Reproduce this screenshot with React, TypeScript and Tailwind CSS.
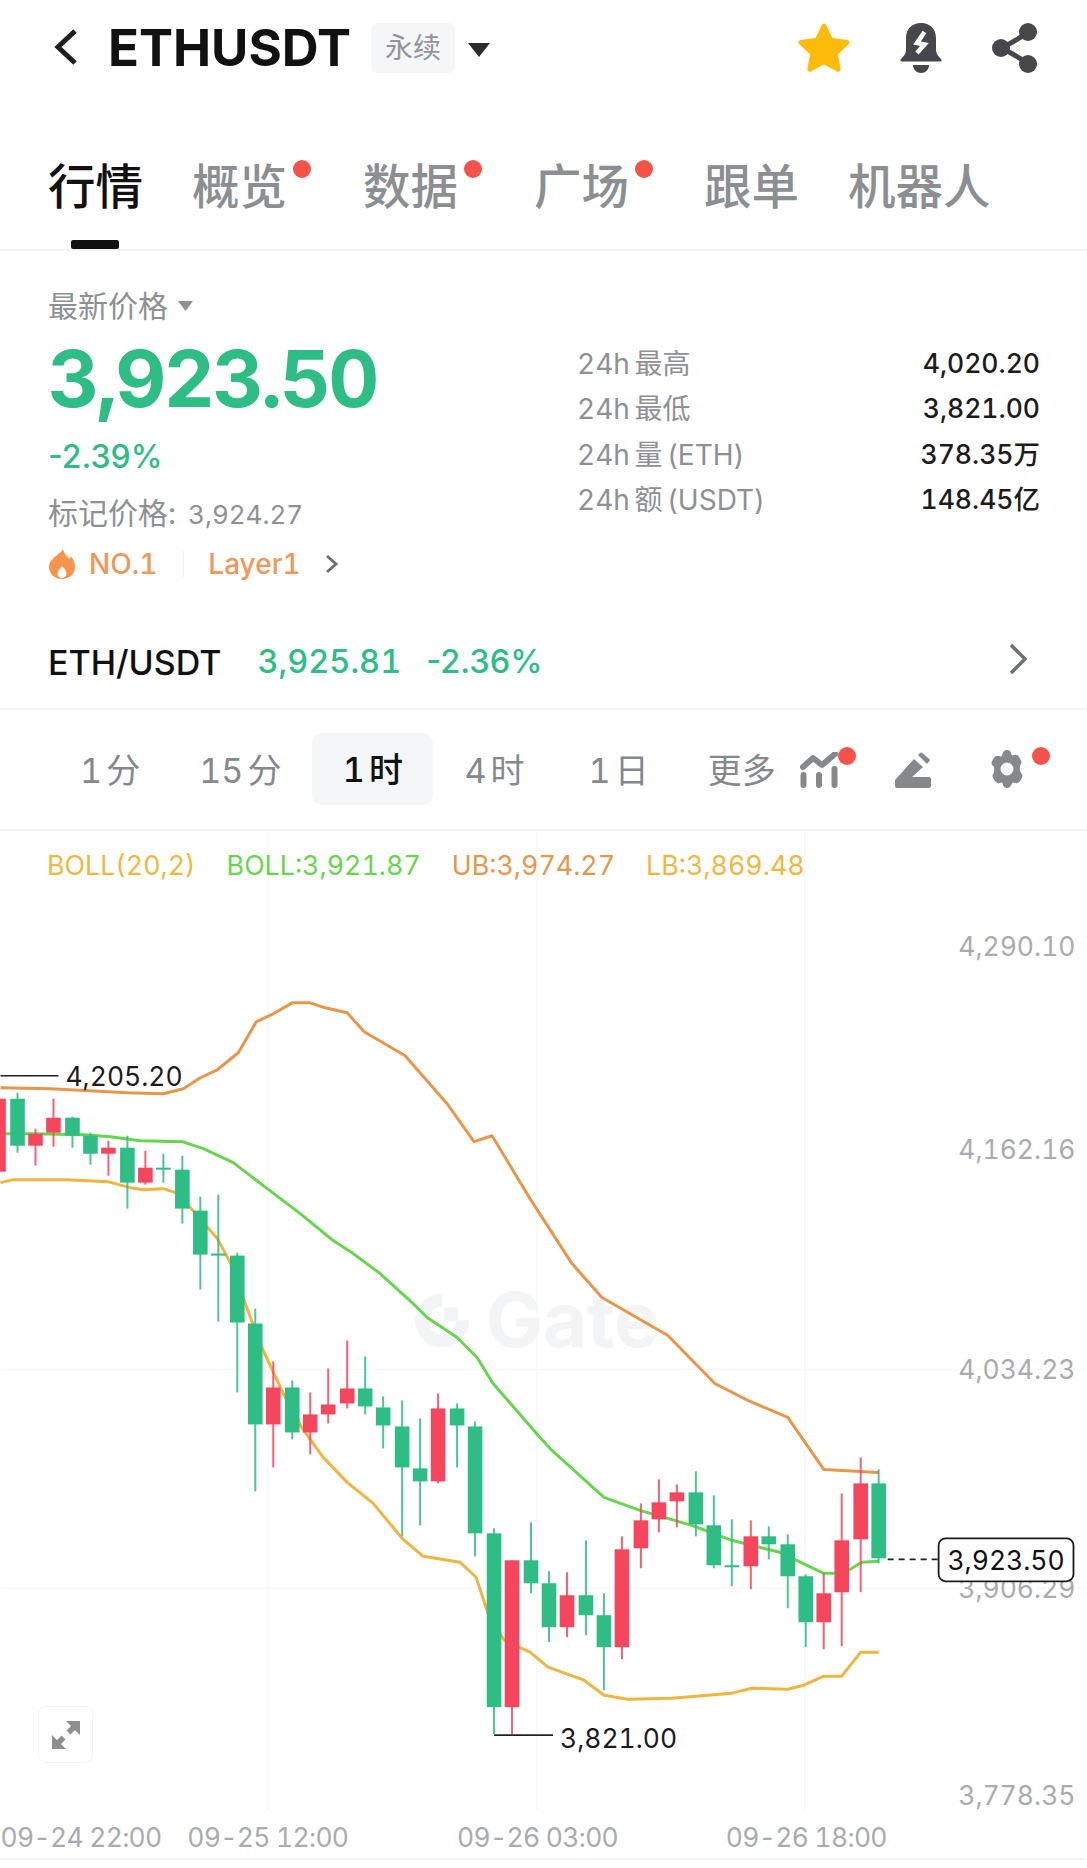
import React from 'react'

const FONT = "font-['Inter','Noto_Sans_CJK_SC',sans-serif]"

// [x, wickTop, wickBottom, bodyTop, bodyBottom, up]
const candles: [number, number, number, number, number, number][] = [
  [-2, 1098, 1171, 1098, 1171, 1],
  [17, 1092, 1152, 1098, 1145, 0],
  [35, 1128, 1165, 1133, 1145, 1],
  [53, 1098, 1146, 1117, 1132, 1],
  [72, 1116, 1147, 1117, 1135, 0],
  [90, 1132, 1164, 1135, 1153, 0],
  [108, 1140, 1175, 1147, 1153, 1],
  [127, 1135, 1208, 1147, 1182, 0],
  [145, 1150, 1184, 1167, 1182, 1],
  [163, 1153, 1182, 1167, 1169, 0],
  [182, 1155, 1223, 1169, 1208, 0],
  [200, 1196, 1289, 1210, 1254, 0],
  [218, 1194, 1321, 1253, 1255, 0],
  [237, 1252, 1392, 1255, 1322, 0],
  [255, 1308, 1491, 1323, 1424, 0],
  [273, 1361, 1467, 1387, 1424, 1],
  [292, 1380, 1439, 1387, 1432, 0],
  [310, 1392, 1454, 1414, 1432, 1],
  [328, 1368, 1423, 1404, 1414, 1],
  [347, 1340, 1408, 1388, 1403, 1],
  [365, 1356, 1414, 1388, 1406, 0],
  [383, 1396, 1448, 1407, 1425, 0],
  [402, 1400, 1536, 1426, 1467, 0],
  [420, 1418, 1525, 1468, 1481, 0],
  [438, 1393, 1483, 1408, 1481, 1],
  [457, 1403, 1467, 1408, 1425, 0],
  [475, 1421, 1556, 1426, 1533, 0],
  [494, 1528, 1734, 1533, 1707, 0],
  [512, 1560, 1734, 1560, 1707, 1],
  [531, 1522, 1593, 1560, 1583, 0],
  [549, 1571, 1642, 1583, 1627, 0],
  [567, 1572, 1637, 1595, 1627, 1],
  [586, 1540, 1635, 1595, 1615, 0],
  [604, 1593, 1690, 1615, 1647, 0],
  [622, 1536, 1659, 1549, 1647, 1],
  [641, 1503, 1568, 1520, 1548, 1],
  [659, 1479, 1532, 1502, 1519, 1],
  [677, 1484, 1527, 1492, 1501, 1],
  [696, 1471, 1536, 1492, 1524, 0],
  [714, 1495, 1568, 1525, 1565, 0],
  [732, 1519, 1586, 1565, 1567, 0],
  [751, 1520, 1589, 1536, 1566, 1],
  [769, 1526, 1559, 1536, 1544, 0],
  [788, 1534, 1608, 1544, 1576, 0],
  [806, 1574, 1647, 1576, 1622, 0],
  [824, 1573, 1649, 1593, 1622, 1],
  [842, 1493, 1646, 1540, 1592, 1],
  [861, 1457, 1592, 1483, 1539, 1],
  [879, 1469, 1563, 1483, 1558, 0],
]

const upperBand =
  '0,1087 50,1088 127,1092 163,1093 183,1088 200,1077 217,1069 238,1052 256,1021 273,1013 292,1002 310,1002 325,1007 347,1012 364,1031 405,1055 447,1103 474,1141 492,1135 530,1198 572,1263 602,1297 668,1335 715,1383 748,1400 788,1417 824,1469 879,1472'
const midBand =
  '0,1133 33,1133 83,1134 110,1136 140,1140 182,1141 203,1148 233,1162 267,1188 300,1213 333,1240 353,1253 380,1273 413,1303 427,1317 457,1337 477,1357 493,1383 540,1437 552,1450 604,1497 640,1510 692,1525 732,1540 780,1552 824,1573 844,1573 862,1562 879,1561'
const lowerBand =
  '0,1182 13,1179 67,1179 107,1181 130,1187 143,1189 163,1188 175,1192 190,1207 217,1238 230,1262 252,1322 263,1350 283,1393 302,1428 323,1457 347,1482 373,1503 402,1538 423,1556 460,1562 476,1577 488,1613 504,1640 530,1652 548,1667 584,1680 604,1695 628,1699 672,1698 732,1693 752,1688 788,1689 804,1685 824,1676 842,1676 861,1652 879,1652'

const yLabels: [string, number][] = [
  ['4,290.10', 945],
  ['4,162.16', 1148],
  ['4,034.23', 1369],
  ['3,906.29', 1588],
  ['3,778.35', 1795],
]

const xLabels: [string, number][] = [
  ['09-24 22:00', 0],
  ['09-25 12:00', 187],
  ['09-26 03:00', 457],
  ['09-26 18:00', 726],
]

const stats = [
  ['24h 最高', '4,020.20'],
  ['24h 最低', '3,821.00'],
  ['24h 量 (ETH)', '378.35万'],
  ['24h 额 (USDT)', '148.45亿'],
]

function RedDot() {
  return <span className="absolute top-[1px] -right-[24px] w-[18px] h-[18px] rounded-full bg-[#f5524a]" />
}

function Chart() {
  return (
    <svg viewBox="0 830 1087 1038" className="w-full h-full block">
      <g stroke="#f6f7f8" strokeWidth="1.5">
        <line x1="268" y1="830" x2="268" y2="1810" />
        <line x1="537" y1="830" x2="537" y2="1810" />
        <line x1="805" y1="830" x2="805" y2="1810" />
        <line x1="0" y1="1369" x2="1087" y2="1369" />
        <line x1="0" y1="1588" x2="1087" y2="1588" />
      </g>
      <line x1="0" y1="1859" x2="1087" y2="1859" stroke="#f3f4f5" strokeWidth="2" />

      {/* watermark */}
      <g fill="#f2f4f5">
        <path d="M442 1293a27 27 0 1 0 27 27h-13a14 14 0 1 1-14-14z" />
        <rect x="444" y="1307" width="14" height="14" />
        <text x="486" y="1347" fontSize="76" fontWeight="700">
          Gate
        </text>
      </g>

      <polyline points={upperBand} fill="none" stroke="#e8964a" strokeWidth="3" strokeLinejoin="round" />
      <polyline points={lowerBand} fill="none" stroke="#f0b440" strokeWidth="3" strokeLinejoin="round" />
      <polyline points={midBand} fill="none" stroke="#66d64c" strokeWidth="3" strokeLinejoin="round" />

      {candles.map(([x, wt, wb, bt, bb, up]) => {
        const c = up ? '#f6465d' : '#2ebd85'
        return (
          <g key={x}>
            <line x1={x} y1={wt} x2={x} y2={wb} stroke={c} strokeWidth="2" opacity="0.85" />
            <rect x={x - 7.3} y={bt} width="14.6" height={bb - bt} fill={c} />
          </g>
        )
      })}

      {/* high / low markers */}
      <line x1="0" y1="1075" x2="58" y2="1075" stroke="#222" strokeWidth="1.6" />
      <text x="65" y="1085" fontSize="26.5" fill="#1c1c1c">
        4,205.20
      </text>
      <line x1="494" y1="1735" x2="553" y2="1735" stroke="#222" strokeWidth="1.6" />
      <text x="560" y="1748" fontSize="26.5" fill="#1c1c1c">
        3,821.00
      </text>

      {yLabels.map(([t, y]) => (
        <text key={t} x="1076" y={y + 10} textAnchor="end" fontSize="26.5" fill="#a9acae">
          {t}
        </text>
      ))}
      {xLabels.map(([t, x]) => (
        <text key={t} x={x} y="1847" fontSize="26.5" fill="#a9acae" className="tracking-[-0.7px]">
          {t}
        </text>
      ))}

      {/* last price */}
      <line x1="888" y1="1559" x2="939" y2="1559" stroke="#222" strokeWidth="1.8" strokeDasharray="6 5" />
      <rect x="939" y="1538" width="135" height="43" rx="7" fill="#fff" stroke="#1c1c1c" strokeWidth="1.8" />
      <text x="1006.5" y="1570" textAnchor="middle" fontSize="26.5" fill="#111">
        3,923.50
      </text>
    </svg>
  )
}

export default function App() {
  return (
    <div className={`w-[1087px] h-[1868px] flex flex-col bg-white overflow-hidden tabular-nums ${FONT}`}>
      {/* header */}
      <div className="h-[96px] flex items-start pt-[23px] pl-[52px] pr-[49px] shrink-0">
        <svg width="26" height="38" viewBox="0 0 26 38" className="mt-[5px]">
          <path d="M23 3 6 19l17 16" fill="none" stroke="#1f1f1f" strokeWidth="5" strokeLinejoin="miter" />
        </svg>
        <span className="ml-[30px] text-[51px] leading-[50px] font-bold text-[#111]">ETHUSDT</span>
        <span className="ml-[20px] w-[84px] h-[50px] rounded-[7px] bg-[#f5f6f7] flex items-center justify-center text-[28px] text-[#92969a]">
          永续
        </span>
        <svg width="22" height="14" viewBox="0 0 22 14" className="ml-[13px] mt-[20px]">
          <path d="M0 0h22L11 14z" fill="#2d2d2d" />
        </svg>
        <div className="ml-auto flex items-start gap-[49px]">
          <svg width="52" height="50" viewBox="0 0 52 50">
            <path
              d="M26 3l6.7 14.2 16.3 2.2-11.8 11 2.9 15.8L26 38.5l-14.1 7.7 2.9-15.8L3 19.4l16.3-2.2z"
              fill="#ffbb0a"
              stroke="#ffbb0a"
              strokeWidth="5"
              strokeLinejoin="round"
            />
          </svg>
          <svg width="44" height="50" viewBox="0 0 44 50">
            <path
              fill="#45474c"
              d="M22 0c9.500 0 15 6.500 15 15v12c0 3.500 2 6 5 9 1.200 1.200.5 2.500-1 2.500H3c-1.500 0-2.200-1.300-1-2.500 3-3 5-5.500 5-9V15C7 6.500 12.500 0 22 0z"
            />
            <path d="M25.500 9 18 20l7.500 1.500L18 30" fill="none" stroke="#fff" strokeWidth="4.500" />
            <path d="M14 42h16c0 4.500-3.500 8-8 8s-8-3.500-8-8z" fill="#45474c" />
          </svg>
          <svg width="46" height="50" viewBox="0 0 46 50">
            <path d="M36 10 10 25l26 15" fill="none" stroke="#45474c" strokeWidth="5" />
            <circle cx="36" cy="9" r="9" fill="#45474c" />
            <circle cx="9" cy="25" r="9" fill="#45474c" />
            <circle cx="36" cy="41" r="9" fill="#45474c" />
          </svg>
        </div>
      </div>

      {/* tabs */}
      <div className="h-[155px] shrink-0 relative border-b-2 border-[#f3f4f5] text-[47.5px] leading-[56px] font-medium text-[#8b8f92]">
        <div className="flex pl-[48px] pt-[63px]">
          <span className="relative text-[#111]">
            行情
            <span className="absolute left-[23px] top-[81px] w-[48px] h-[9px] rounded-[2px] bg-[#111]" />
          </span>
          <span className="relative ml-[49px]">
            概览
            <RedDot />
          </span>
          <span className="relative ml-[76px]">
            数据
            <RedDot />
          </span>
          <span className="relative ml-[76px]">
            广场
            <RedDot />
          </span>
          <span className="ml-[75px]">跟单</span>
          <span className="ml-[49px]">机器人</span>
        </div>
      </div>

      {/* market summary */}
      <div className="h-[335px] shrink-0 flex pl-[48px] pr-[47px] pt-[37px]">
        <div className="flex-1 flex flex-col items-start">
          <div className="flex items-center h-[36px] text-[30px] text-[#8d9194]">
            最新价格
            <svg width="15" height="10" viewBox="0 0 15 10" className="ml-[10px]">
              <path d="M0 0h15L7.500 10z" fill="#8d9194" />
            </svg>
          </div>
          <div className="mt-[11px] h-[86px] leading-[86px] text-[79px] font-bold text-[#2ebd85] tracking-[-2.5px]">
            3,923.50
          </div>
          <div className="mt-[18px] h-[36px] leading-[36px] text-[32px] font-medium text-[#2ebd85] normal-nums">-2.39%</div>
          <div className="mt-[20px] h-[36px] leading-[36px] text-[26px] text-[#8d9194] flex items-baseline">
            <span className="text-[30px]">标记价格:</span>
            <span className="ml-[12px]">3,924.27</span>
          </div>
          <div className="mt-[11px] h-[44px] flex items-center text-[28px] font-medium text-[#f0975a]">
            <svg width="26" height="30" viewBox="0 0 26 30" className="ml-[1px]">
              <path
                fill="#f8934a"
                fillRule="evenodd"
                d="M14 0c1 5 4 7 6.500 10 .8-1 1.200-2 1.300-3 2.500 3 4.200 7 4.200 11 0 7-5.500 12-13 12S0 25 0 18C0 11 7 8 9 5c2-1 4-3 5-5zm-1 17c-2 2.500-4.500 4.500-4.500 7.500 0 2.500 2 4.500 4.500 4.500s4.500-2 4.500-4.500c0-3-2.500-5-4.500-7.500z"
              />
            </svg>
            <span className="ml-[14px]">NO.1</span>
            <span className="ml-[26px] w-[1px] h-[26px] bg-[#eeeff0]" />
            <span className="ml-[24px]">Layer1</span>
            <svg width="16" height="20" viewBox="0 0 16 20" className="ml-[23px]">
              <path d="M3 2l9 8-9 8" fill="none" stroke="#6d7175" strokeWidth="3" />
            </svg>
          </div>
        </div>
        <div className="w-[463px] pt-[53px] flex flex-col">
          {stats.map(([k, v]) => (
            <div key={k} className="flex items-center justify-between h-[45.500px]">
              <span className="text-[28px] text-[#8d9194] [word-spacing:-3px]">{k}</span>
              <span className="text-[26.5px] text-[#1c1c1c] font-medium">{v}</span>
            </div>
          ))}
        </div>
      </div>

      {/* spot pair */}
      <div className="h-[124px] shrink-0 border-b-2 border-[#f3f4f5] flex items-center pt-[30px] pl-[48px] pr-[59px] text-[32.5px] font-medium">
        <span className="text-[34px] text-[#111]">ETH/USDT</span>
        <span className="ml-[36px] text-[#2ebd85]">3,925.81</span>
        <span className="ml-[25px] text-[#2ebd85] normal-nums">-2.36%</span>
        <svg width="20" height="32" viewBox="0 0 20 32" className="ml-auto -mt-[6px]">
          <path d="M3 2l14 14L3 30" fill="none" stroke="#6d7175" strokeWidth="3.500" />
        </svg>
      </div>

      {/* intervals */}
      <div className="h-[121px] shrink-0 border-b-2 border-[#f3f4f5] relative flex items-start pt-[23px] text-[34px] text-[#85898c] [word-spacing:-5px]">
        <span className="ml-[80px] mt-[12px] leading-[52px]">1 分</span>
        <span className="ml-[59px] mt-[12px] leading-[52px]">15 分</span>
        <span className="ml-[31px] w-[121px] h-[72px] rounded-[10px] bg-[#f5f6f7] flex items-center justify-center text-[#111] font-medium">
          1 时
        </span>
        <span className="ml-[31px] mt-[12px] leading-[52px]">4 时</span>
        <span className="ml-[64px] mt-[12px] leading-[52px]">1 日</span>
        <span className="ml-[59px] mt-[12px] leading-[52px]">更多</span>
        <div className="relative ml-[24px] mt-[19px] w-[38px] h-[36px]">
          <svg width="38" height="36" viewBox="0 0 38 36">
            <path d="M3 15l10-9 9 7 13-11" fill="none" stroke="#85898c" strokeWidth="6" strokeLinecap="round" strokeLinejoin="round" />
            <path d="M3.500 23v10M19 23v10M34.500 17v16" fill="none" stroke="#85898c" strokeWidth="6" strokeLinecap="round" />
          </svg>
          <span className="absolute -top-[5px] -right-[18px] w-[18px] h-[18px] rounded-full bg-[#f5524a]" />
        </div>
        <svg width="36" height="36" viewBox="0 0 36 36" className="ml-[57px] mt-[19px]">
          <path d="M0 28 19 7l9 8-11 10h17c1 0 2 1 2 2v7c0 1-1 2-2 2H2c-1 0-2-1-2-2z" fill="#85898c" />
          <path d="M23 3l2-2c.7-.7 1.600-.7 2.300 0l7 6c.7.700.7 1.600 0 2.300L32 12z" fill="#85898c" />
        </svg>
        <div className="relative ml-[58px] mt-[17px] w-[36px] h-[38px]">
          <svg width="36" height="38" viewBox="0 0 36 38">
            <path
              fillRule="evenodd"
              fill="#85898c"
              d="M18 0c2 0 3.500 1 4 3l.8 2.500 2.500-.6c2-.5 3.700.3 4.700 2l1.800 3c1 1.700.8 3.600-.5 5L31 16.800c-.3 1-.3 3.400 0 4.400l1.300 2c1.300 1.400 1.500 3.300.5 5L31 31.100c-1 1.700-2.700 2.500-4.700 2l-2.500-.6L22 35c-.5 2-2 3-4 3s-3.500-1-4-3l-.8-2.500-2.500.6c-2 .5-3.700-.3-4.700-2l-1.800-3c-1-1.700-.8-3.600.5-5L5 21.200c.3-1 .3-3.400 0-4.400L3.700 15.800c-1.300-1.400-1.500-3.300-.5-5L5 7.900c1-1.700 2.700-2.500 4.700-2l2.500.6L14 3c.5-2 2-3 4-3zm0 12.500a6.500 6.500 0 1 0 0 13 6.500 6.500 0 0 0 0-13z"
            />
          </svg>
          <span className="absolute -top-[3px] -right-[25px] w-[18px] h-[18px] rounded-full bg-[#f5524a]" />
        </div>
      </div>

      {/* chart */}
      <div className="relative flex-1 min-h-0">
        <Chart />
        <div className="absolute left-[47px] top-[19px] flex text-[26.8px] leading-[30px]">
          <span className="text-[#f0b840]">BOLL(20,2)</span>
          <span className="ml-[31px] text-[#66d64c]">BOLL:3,921.87</span>
          <span className="ml-[31px] text-[#e8964a]">UB:3,974.27</span>
          <span className="ml-[31px] text-[#f0b840]">LB:3,869.48</span>
        </div>
        <button className="absolute left-[38px] top-[875px] w-[55px] h-[57px] rounded-[8px] bg-white border border-[#f3f4f5] flex items-center justify-center">
          <svg width="30" height="30" viewBox="0 0 30 30">
            <path d="M29 1v14l-5-5-4.500 4.500-4-4L20 6l-5-5zM1 29V15l5 5 4.500-4.500 4 4L10 24l5 5z" fill="#8d8f91" />
          </svg>
        </button>
      </div>
    </div>
  )
}
